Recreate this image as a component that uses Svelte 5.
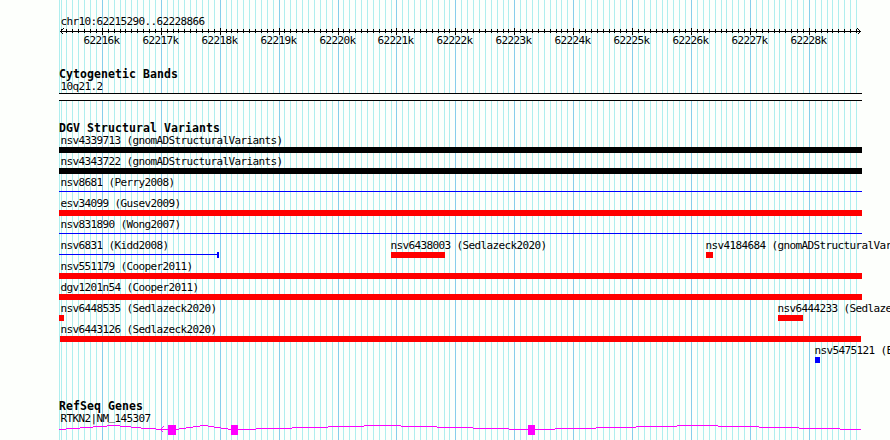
<script lang="ts">
	interface Feature {
		name: string;
		start: number;
		end: number;
		labelX: number;
		kind: 'gain' | 'loss' | 'complex' | 'line';
		cap?: boolean;
	}

	const WIDTH = 890;
	const LEFT = 59;
	const RIGHT = 862;
	const REGION_START = 62215290;
	const REGION_END = 62228866;
	const SCALE = 800 / (REGION_END - REGION_START + 1);

	const toX = (bp: number) => Math.round(60 + (bp - REGION_START) * SCALE);

	const ticks: { x: number; major: boolean; label: string }[] = [];
	for (let bp = 62215300; bp <= 62228800; bp += 100) {
		ticks.push({ x: toX(bp), major: bp % 1000 === 0, label: `${bp / 1000}k` });
	}

	const full = (name: string, kind: Feature['kind']): Feature[] => [
		{ name, start: LEFT, end: RIGHT, labelX: 60.5, kind },
	];

	const rows: Feature[][] = [
		full('nsv4339713 (gnomADStructuralVariants)', 'complex'),
		full('nsv4343722 (gnomADStructuralVariants)', 'complex'),
		full('nsv8681 (Perry2008)', 'line'),
		full('esv34099 (Gusev2009)', 'loss'),
		full('nsv831890 (Wong2007)', 'line'),
		[
			{ name: 'nsv6831 (Kidd2008)', start: LEFT, end: 219, labelX: 60.5, kind: 'line', cap: true },
			{ name: 'nsv6438003 (Sedlazeck2020)', start: 391, end: 445, labelX: 390.5, kind: 'loss' },
			{
				name: 'nsv4184684 (gnomADStructuralVariants)',
				start: 706,
				end: 713,
				labelX: 705.5,
				kind: 'loss',
			},
		],
		full('nsv551179 (Cooper2011)', 'loss'),
		full('dgv1201n54 (Cooper2011)', 'loss'),
		[
			{ name: 'nsv6448535 (Sedlazeck2020)', start: LEFT, end: 64, labelX: 60.5, kind: 'loss' },
			{ name: 'nsv6444233 (Sedlazeck2020)', start: 778, end: 803, labelX: 777.5, kind: 'loss' },
		],
		[{ name: 'nsv6443126 (Sedlazeck2020)', start: 60, end: 861, labelX: 60.5, kind: 'loss' }],
		[{ name: 'nsv5475121 (E', start: 815, end: 820, labelX: 814.5, kind: 'gain' }],
	];

	const exons = [
		{ x: 168, width: 8 },
		{ x: 231, width: 7 },
		{ x: 528, width: 7 },
	];

	// runs of [x, y], each run lasting until the next x
	const introns = [
		[59, 17], [66, 16], [80, 15], [93, 14], [107, 13], [120, 14], [131, 15], [141, 16], [156, 17],
		[176, 17], [179, 16], [186, 15], [193, 14], [200, 13], [208, 14], [214, 15], [221, 16], [228, 17],
		[256, 16], [292, 15], [328, 14], [364, 13], [401, 14], [437, 15], [473, 16], [509, 17],
		[555, 16], [596, 15], [636, 14], [677, 13], [718, 14], [759, 15], [799, 16], [840, 17],
	];
</script>

<div class="browser">
	<svg class="grid" width={WIDTH} height="440">
		<rect class="minor" x={LEFT} y="0" width="1" height="440" />
		{#each ticks as tick}
			<rect class={tick.major ? 'major' : 'minor'} x={tick.x} y="0" width="1" height="440" />
		{/each}
	</svg>

	<svg class="ruler" width={WIDTH} height="68">
		<text x="60.5" y="25">chr10:62215290..62228866</text>
		<rect x="60" y="31" width="801" height="1" />
		<path class="arrow" d="M63.5 28.5 L60.5 31.5 L63.5 34.5 M857.5 28.5 L860.5 31.5 L857.5 34.5" />
		{#each ticks as tick}
			{#if tick.major}
				<rect x={tick.x} y="28" width="1" height="7" />
				<text x={tick.x - 18.5} y="44">{tick.label}</text>
			{:else}
				<rect x={tick.x} y="29" width="1" height="4" />
			{/if}
		{/each}
	</svg>

	<section class="cytoband">
		<h2>Cytogenetic Bands</h2>
		<svg width={WIDTH} height="21">
			<text x="60.5" y="10">10q21.2</text>
			<rect x={LEFT} y="13" width={RIGHT - LEFT} height="8" />
			<rect class="band" x={LEFT} y="14" width={RIGHT - LEFT} height="6" />
		</svg>
	</section>

	<section class="variants">
		<h2>DGV Structural Variants</h2>
		{#each rows as row}
			<svg width={WIDTH} height="21">
				{#each row as feature}
					<text x={feature.labelX} y="10">{feature.name}</text>
					<rect
						class={feature.kind}
						x={feature.start}
						y={feature.kind === 'line' ? 15 : 13}
						width={feature.end - feature.start}
						height={feature.kind === 'line' ? 1 : 6}
					/>
					{#if feature.cap}
						<rect class="line" x={feature.end - 2} y="13" width="2" height="6" />
					{/if}
				{/each}
			</svg>
		{/each}
	</section>

	<section class="genes">
		<h2>RefSeq Genes</h2>
		<svg width={WIDTH} height="28">
			<text x="60.5" y="10">RTKN2|NM<tspan dy="-2">_</tspan><tspan dy="2">145307</tspan></text>
			<g class="gene">
				{#each introns as [x, y], i}
					<rect {x} {y} width={(introns[i + 1]?.[0] ?? 861) - x} height="1" />
				{/each}
				{#each exons as exon}
					<rect x={exon.x} y="13" width={exon.width} height="10" />
				{/each}
			</g>
			<path class="strand" d="M163.5 14.5 L160.5 17.5 L163.5 20.5" />
		</svg>
	</section>
</div>

<style>
	:global(body) {
		background: #fdfffc;
	}

	.browser {
		position: relative;
		width: 890px;
		height: 440px;
		overflow: hidden;
		background: #fdfffc;
		color: #000;
		font-family: 'DejaVu Sans Mono', monospace;
		font-size: 11px;
		letter-spacing: -0.6226px;
	}

	svg {
		display: block;
		position: relative;
		shape-rendering: crispEdges;
	}

	text {
		white-space: pre;
	}

	.grid {
		position: absolute;
		top: 0;
		left: 0;
	}

	.minor {
		fill: #afeeee;
	}

	.major {
		fill: #87ceeb;
	}

	h2 {
		position: relative;
		height: 12px;
		margin: 0;
		padding-left: 59px;
		font-size: 11.5px;
		line-height: 13px;
		font-weight: bold;
		letter-spacing: 0.0764px;
	}

	.cytoband {
		height: 54px;
	}

	.variants {
		height: 278px;
	}

	.band {
		fill: #fdfffc;
	}

	.loss {
		fill: #f00;
	}

	.gain,
	.line {
		fill: #00f;
	}

	.complex {
		fill: #000;
	}

	.gene {
		fill: #f0f;
	}

	.arrow,
	.strand {
		fill: none;
		stroke: #000;
		stroke-width: 1;
	}

	.strand {
		stroke: #f0f;
	}
</style>
